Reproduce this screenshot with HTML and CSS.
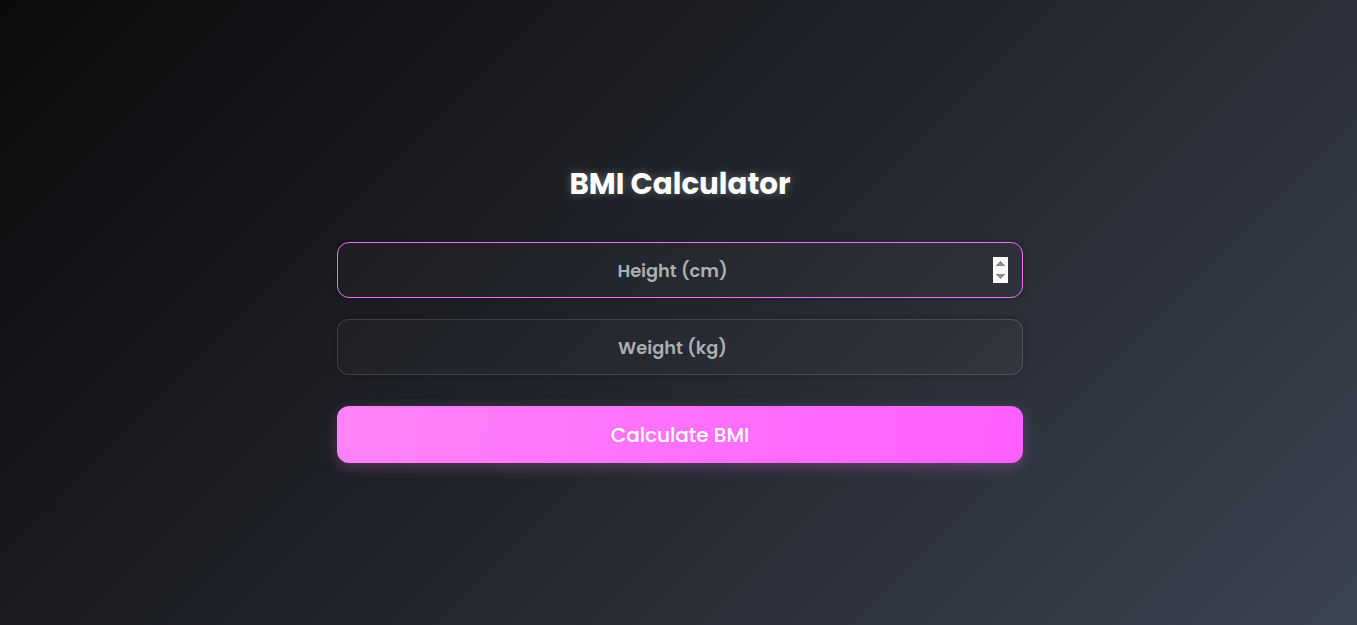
FILE: index.html
```html
<!DOCTYPE html>
<html lang="en">
<head>
<meta charset="UTF-8">
<title>BMI Calculator</title>
<link rel="stylesheet" href="styles.css">
</head>
<body>
<main class="calc">
  <h1 class="calc-title">BMI Calculator</h1>
  <form class="calc-form">
    <input class="calc-input" type="number" placeholder="Height (cm)" autofocus>
    <input class="calc-input" type="number" placeholder="Weight (kg)">
    <button class="calc-btn" type="button">Calculate BMI</button>
  </form>
</main>
</body>
</html>
```
FILE: styles.css
```css
* { box-sizing: border-box; }
html, body { height: 100%; }
body {
  margin: 0;
  padding-left: 3px;
  min-height: 100vh;
  display: flex;
  align-items: center;
  justify-content: center;
  background: linear-gradient(135deg, #0b0b0c 0%, #22252c 50%, #3b4452 100%);
  font-family: "Poppins", "Open Sans", "Noto Sans", sans-serif;
  color: #fff;
}
.calc {
  width: 686px;
  padding-top: 4px;
  display: flex;
  flex-direction: column;
  align-items: stretch;
}
.calc-title {
  margin: 0 0 40px;
  text-align: center;
  font-size: 29.3px;
  font-weight: 700;
  line-height: 36px;
  text-shadow: 0 0 10px rgba(255,255,255,0.3);
}
.calc-form {
  display: flex;
  flex-direction: column;
  gap: 21px;
}
.calc-input {
  height: 56px;
  width: 100%;
  border-radius: 12px;
  border: 1px solid rgba(255,255,255,0.15);
  background: rgba(255,255,255,0.02);
  color: #fff;
  font-family: inherit;
  font-size: 17.8px;
  font-weight: 600;
  text-align: center;
  padding: 0 14px;
  outline: none;
  box-shadow: 0 0 6px rgba(0,0,0,0.25);
}
.calc-input::placeholder { color: #adaeb1; }
.calc-input:focus { border-color: #f36ff3; }
.calc-btn {
  margin-top: 10px;
  height: 57px;
  border: none;
  border-radius: 12px;
  background: linear-gradient(100deg, #ff82f8 0%, #ff5fff 100%);
  color: #fff;
  font-family: inherit;
  font-size: 20px;
  font-weight: 500;
  box-shadow: 0 4px 14px rgba(255,120,255,0.25);
  cursor: pointer;
}
```
